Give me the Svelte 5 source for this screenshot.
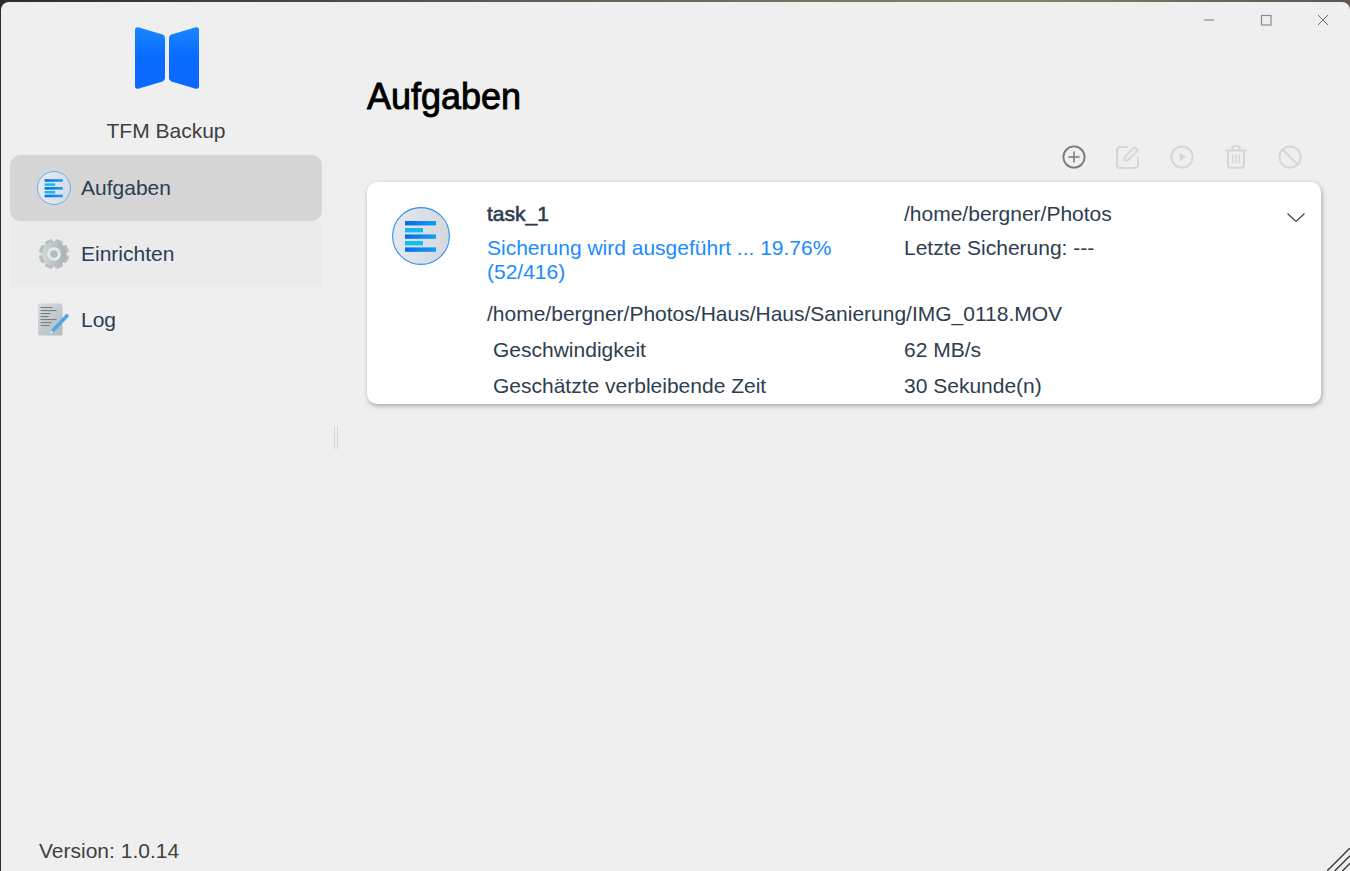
<script>
  const nav = [
    { label: 'Aufgaben', kind: 'tasks', cls: 'active' },
    { label: 'Einrichten', kind: 'gear', cls: 'hover' },
    { label: 'Log', kind: 'log', cls: '' }
  ];
  const gearTeeth = [0, 45, 90, 135];
</script>

<div class="desktop">
  <div class="window">
    <aside class="sidebar">
      <div class="brand">
        <svg class="logo" width="64" height="62" viewBox="0 0 64 62">
          <defs>
            <linearGradient id="lg" x1="0" y1="0" x2="0" y2="1">
              <stop offset="0" stop-color="#1a88ff" />
              <stop offset="0.45" stop-color="#0a6cff" />
              <stop offset="1" stop-color="#0a68ff" />
            </linearGradient>
          </defs>
          <path fill="url(#lg)" d="M3.2 0.3 L27.6 7.6 Q30 8.4 30 11 L30 51 Q30 53.6 27.6 54.4 L3.2 61.7 Q0 62.2 0 59 L0 3 Q0 -0.2 3.2 0.3 Z" />
          <path fill="url(#lg)" d="M60.8 0.3 L36.4 7.6 Q34 8.4 34 11 L34 51 Q34 53.6 36.4 54.4 L60.8 61.7 Q64 62.2 64 59 L64 3 Q64 -0.2 60.8 0.3 Z" />
        </svg>
        <div class="app-name">TFM Backup</div>
      </div>

      <nav class="nav">
        {#each nav as item}
          <div class="nav-item {item.cls}">
            <span class="nav-icon">
              {#if item.kind === 'tasks'}
                <svg width="34" height="34" viewBox="0 0 58 58">
                  <defs>
                    <linearGradient id="disc1" x1="0" y1="0" x2="1" y2="0">
                      <stop offset="0" stop-color="#e6ecf2" />
                      <stop offset="1" stop-color="#d6dbe1" />
                    </linearGradient>
                    <linearGradient id="bar1" x1="0" y1="0" x2="1" y2="0">
                      <stop offset="0" stop-color="#0a68ee" />
                      <stop offset="1" stop-color="#12a0f0" />
                    </linearGradient>
                  </defs>
                  <circle cx="29" cy="29" r="28.2" fill="url(#disc1)" stroke="#58aef5" stroke-width="1.6" />
                  <rect x="13" y="14" width="31" height="4.4" fill="url(#bar1)" />
                  <rect x="13" y="21" width="18" height="4.4" fill="#10bdf0" />
                  <rect x="13" y="27.4" width="31" height="4.4" fill="url(#bar1)" />
                  <rect x="13" y="34" width="18" height="4.4" fill="#10bdf0" />
                  <rect x="13" y="40.4" width="31" height="4.4" fill="url(#bar1)" />
                </svg>
              {:else if item.kind === 'gear'}
                <svg width="32" height="32" viewBox="0 0 32 32">
                  <defs>
                    <linearGradient id="gearg" gradientUnits="userSpaceOnUse" x1="1" y1="16" x2="31" y2="16">
                      <stop offset="0" stop-color="#d6dedd" />
                      <stop offset="1" stop-color="#a2abaf" />
                    </linearGradient>
                  </defs>
                  <circle cx="16" cy="16" r="12.4" fill="url(#gearg)" />
                  {#each gearTeeth as a}
                    <rect x="12" y="1" width="8" height="30" rx="2" fill="#b6bec0" transform="rotate({a + 22.5} 16 16)" />
                  {/each}
                  <circle cx="16" cy="16" r="12" fill="url(#gearg)" />
                  <circle cx="16" cy="16" r="6.8" fill="#e6e9e9" />
                  <circle cx="16" cy="16" r="3.8" fill="#b4bbbd" />
                </svg>
              {:else}
                <svg width="34" height="34" viewBox="0 0 34 34">
                  <defs>
                    <linearGradient id="pg" x1="0" y1="0" x2="1" y2="1">
                      <stop offset="0" stop-color="#d8dcdd" />
                      <stop offset="1" stop-color="#b3babd" />
                    </linearGradient>
                  </defs>
                  <rect x="1" y="0.5" width="24.5" height="32" rx="1.5" fill="url(#pg)" />
                  <g fill="#777d81">
                    <rect x="3.5" y="4" width="12" height="1.1" />
                    <rect x="3.5" y="7" width="16" height="1.1" />
                    <rect x="3.5" y="10" width="10" height="1.1" />
                    <rect x="3.5" y="13" width="8" height="1.1" />
                    <rect x="3.5" y="16" width="16" height="1.1" />
                    <rect x="3.5" y="19" width="11" height="1.1" />
                    <rect x="3.5" y="22" width="9" height="1.1" />
                  </g>
                  <path d="M12.5 31 L14 27 L29.6 10.6 L32.2 13 L16.6 29.4 Z" fill="#4fa6e8" />
                  <path d="M12.5 31 L14 27 L16.6 29.4 Z" fill="#dfe8ee" />
                </svg>
              {/if}
            </span>
            <span>{item.label}</span>
          </div>
        {/each}
      </nav>

      <div class="version">Version: 1.0.14</div>
    </aside>

    <main class="main">
      <h1>Aufgaben</h1>

      <div class="toolbar">
        <svg class="tool" width="26" height="26" viewBox="0 0 26 26" fill="none" stroke="#77797c" stroke-width="1.8">
          <circle cx="13" cy="13" r="10.6" />
          <path d="M13 7.4 V18.6 M7.4 13 H18.6" stroke-width="1.5" />
        </svg>
        <svg class="tool" width="26" height="26" viewBox="0 0 26 26" fill="none" stroke="#d8d6d3" stroke-width="2">
          <path d="M12.5 3 H5.5 Q2 3 2 6.5 V20.5 Q2 24 5.5 24 H19.5 Q23 24 23 20.5 V13" />
          <path d="M9.5 16.5 L10 12.8 L19.6 3.2 L22.8 6.4 L13.2 16 Z" stroke-linejoin="round" />
        </svg>
        <svg class="tool" width="26" height="26" viewBox="0 0 26 26" fill="none" stroke="#d8d6d3" stroke-width="2">
          <circle cx="13" cy="13" r="10.6" />
          <path d="M10.6 8.6 L17 13 L10.6 17.4 Z" fill="#d8d6d3" stroke="none" />
        </svg>
        <svg class="tool" width="26" height="26" viewBox="0 0 26 26" fill="none" stroke="#d8d6d3" stroke-width="2">
          <path d="M2.5 6.5 H23.5" />
          <path d="M9.5 6 V4 Q9.5 2.2 11 2.2 H15 Q16.5 2.2 16.5 4 V6" />
          <path d="M5 6.5 V21 Q5 23.8 7.6 23.8 H18.4 Q21 23.8 21 21 V6.5" />
          <path d="M9.8 10.5 V19.5 M13 10.5 V19.5 M16.2 10.5 V19.5" stroke-width="1.6" />
        </svg>
        <svg class="tool" width="26" height="26" viewBox="0 0 26 26" fill="none" stroke="#d8d6d3" stroke-width="2">
          <circle cx="13" cy="13" r="10.6" />
          <path d="M5.6 5.6 L20.4 20.4" />
        </svg>
      </div>

      <section class="card">
        <svg class="task-icon" width="58" height="58" viewBox="0 0 58 58">
          <defs>
            <linearGradient id="disc2" x1="0" y1="0" x2="1" y2="0">
              <stop offset="0" stop-color="#e3e9ef" />
              <stop offset="1" stop-color="#d3d8de" />
            </linearGradient>
            <linearGradient id="bar2" x1="0" y1="0" x2="1" y2="0">
              <stop offset="0" stop-color="#0a68ee" />
              <stop offset="1" stop-color="#12a0f0" />
            </linearGradient>
          </defs>
          <circle cx="29" cy="29" r="28.4" fill="url(#disc2)" stroke="#2f90ee" stroke-width="1.1" />
          <rect x="13" y="14" width="31" height="4.4" fill="url(#bar2)" />
          <rect x="13" y="21" width="18" height="4.4" fill="#10bdf0" />
          <rect x="13" y="27.4" width="31" height="4.4" fill="url(#bar2)" />
          <rect x="13" y="34" width="18" height="4.4" fill="#10bdf0" />
          <rect x="13" y="40.4" width="31" height="4.4" fill="url(#bar2)" />
        </svg>

        <div class="details">
          <div class="head">
            <div class="col-a">
              <div class="task-name">task_1</div>
              <div class="status">Sicherung wird ausgeführt ... 19.76% (52/416)</div>
            </div>
            <div class="col-b">
              <div class="line">/home/bergner/Photos</div>
              <div class="line">Letzte Sicherung: ---</div>
            </div>
          </div>
          <div class="current">/home/bergner/Photos/Haus/Haus/Sanierung/IMG_0118.MOV</div>
          <div class="stat"><span class="stat-k">Geschwindigkeit</span><span>62 MB/s</span></div>
          <div class="stat"><span class="stat-k">Geschätzte verbleibende Zeit</span><span>30 Sekunde(n)</span></div>
        </div>

        <svg class="chevron" width="20" height="12" viewBox="0 0 20 12" fill="none" stroke="#3a3d40" stroke-width="1.1">
          <path d="M1.5 1.5 L10 9.5 L18.5 1.5" />
        </svg>
      </section>
    </main>

    <div class="win-controls">
      <svg width="12" height="12" viewBox="0 0 12 12"><path d="M1 6 H11" stroke="#a3a3a3" stroke-width="1.4" /></svg>
      <svg width="12" height="12" viewBox="0 0 12 12"><rect x="1.5" y="1.5" width="9.5" height="9.5" fill="none" stroke="#8b8b8b" stroke-width="1.2" /></svg>
      <svg width="12" height="12" viewBox="0 0 12 12"><path d="M1 1 L11 11 M11 1 L1 11" stroke="#6e6e6e" stroke-width="1" /></svg>
    </div>

    <div class="splitter"></div>

    <svg class="grip" width="23" height="23" viewBox="0 0 24 24" stroke="#3c3c3c" stroke-width="1.5">
      <path d="M0 24 L24 0 M8 24 L24 8 M16 24 L24 16" />
    </svg>
  </div>
</div>

<style>
  :global(body) {
    margin: 0;
    background: #3a352f;
    overflow: hidden;
  }

  .desktop {
    height: 871px;
    padding: 2px 0 0 1px;
    box-sizing: border-box;
    background: linear-gradient(90deg, #2e2a26, #6b6258 45%, #8a8072 75%, #5d554c);
  }

  .window {
    position: relative;
    display: flex;
    height: 869px;
    background: #efefef;
    border-radius: 8px 8px 0 0;
    overflow: hidden;
    font-family: "Liberation Sans", Arial, sans-serif;
    color: #303133;
  }

  .sidebar {
    display: flex;
    flex-direction: column;
    flex: none;
    width: 330px;
    box-sizing: border-box;
    padding: 0 9px 0 9px;
  }

  .brand {
    display: flex;
    flex-direction: column;
    align-items: center;
    padding-top: 25px;
    height: 153px;
    box-sizing: border-box;
  }

  .logo {
    display: block;
    margin-left: 2px;
  }

  .app-name {
    margin-top: 30px;
    font-size: 21px;
    line-height: 24px;
    color: #404040;
  }

  .nav {
    display: flex;
    flex-direction: column;
    flex: 1;
  }

  .nav-item {
    display: flex;
    align-items: center;
    height: 66px;
    padding-left: 27px;
    gap: 10px;
    font-size: 21px;
    color: #2c3e50;
  }

  .nav-item.active {
    background: #d6d6d6;
    border-radius: 10px;
  }

  .nav-item.hover {
    background: #ebebeb;
  }

  .nav-icon {
    display: flex;
    align-items: center;
    justify-content: center;
    width: 34px;
    height: 34px;
  }

  .version {
    padding: 0 0 8px 29px;
    font-size: 21px;
    line-height: 24px;
    color: #404040;
  }

  .main {
    flex: 1;
    min-width: 0;
    padding: 0 29px 0 36px;
  }

  h1 {
    margin: 72px 0 0;
    font-size: 36px;
    line-height: 46px;
    font-weight: 400;
    color: #000;
    -webkit-text-stroke: 0.9px #000;
  }

  .toolbar {
    display: flex;
    justify-content: flex-end;
    gap: 28px;
    margin-top: 15px;
    padding-right: 18px;
    height: 47px;
  }

  .tool {
    display: block;
    margin-top: 9px;
  }

  .card {
    position: relative;
    display: flex;
    height: 222px;
    background: #fff;
    border-radius: 10px;
    box-shadow: 1px 2px 5px rgba(0, 0, 0, 0.3);
    font-size: 21px;
    color: #2c3e50;
    box-sizing: border-box;
    padding: 20px 0 0 25px;
    overflow: hidden;
  }

  .task-icon {
    flex: none;
    margin-top: 5px;
  }

  .details {
    margin-left: 37px;
    flex: 1;
  }

  .head {
    display: flex;
  }

  .col-a {
    width: 417px;
    flex: none;
    padding-right: 60px;
    box-sizing: border-box;
  }

  .task-name {
    font-weight: 400;
    -webkit-text-stroke: 0.6px #2c3e50;
    line-height: 24px;
  }

  .status {
    margin-top: 10px;
    line-height: 24px;
    color: #1a8cff;
  }

  .col-b .line {
    line-height: 24px;
    margin-bottom: 10px;
  }

  .current {
    margin-top: 18px;
    line-height: 24px;
  }

  .stat {
    display: flex;
    margin-top: 12px;
    line-height: 24px;
  }

  .stat-k {
    width: 411px;
    margin-left: 6px;
    flex: none;
  }

  .chevron {
    position: absolute;
    top: 30px;
    right: 15px;
  }

  .win-controls {
    position: absolute;
    top: 12px;
    right: 21px;
    display: flex;
    gap: 45px;
  }

  .win-controls svg {
    display: block;
  }

  .splitter {
    position: absolute;
    left: 333px;
    top: 424px;
    width: 2px;
    height: 23px;
    border-left: 1px solid #d4d4d4;
    border-right: 1px solid #d4d4d4;
  }

  .grip {
    position: absolute;
    right: 0;
    bottom: 0;
  }
</style>
